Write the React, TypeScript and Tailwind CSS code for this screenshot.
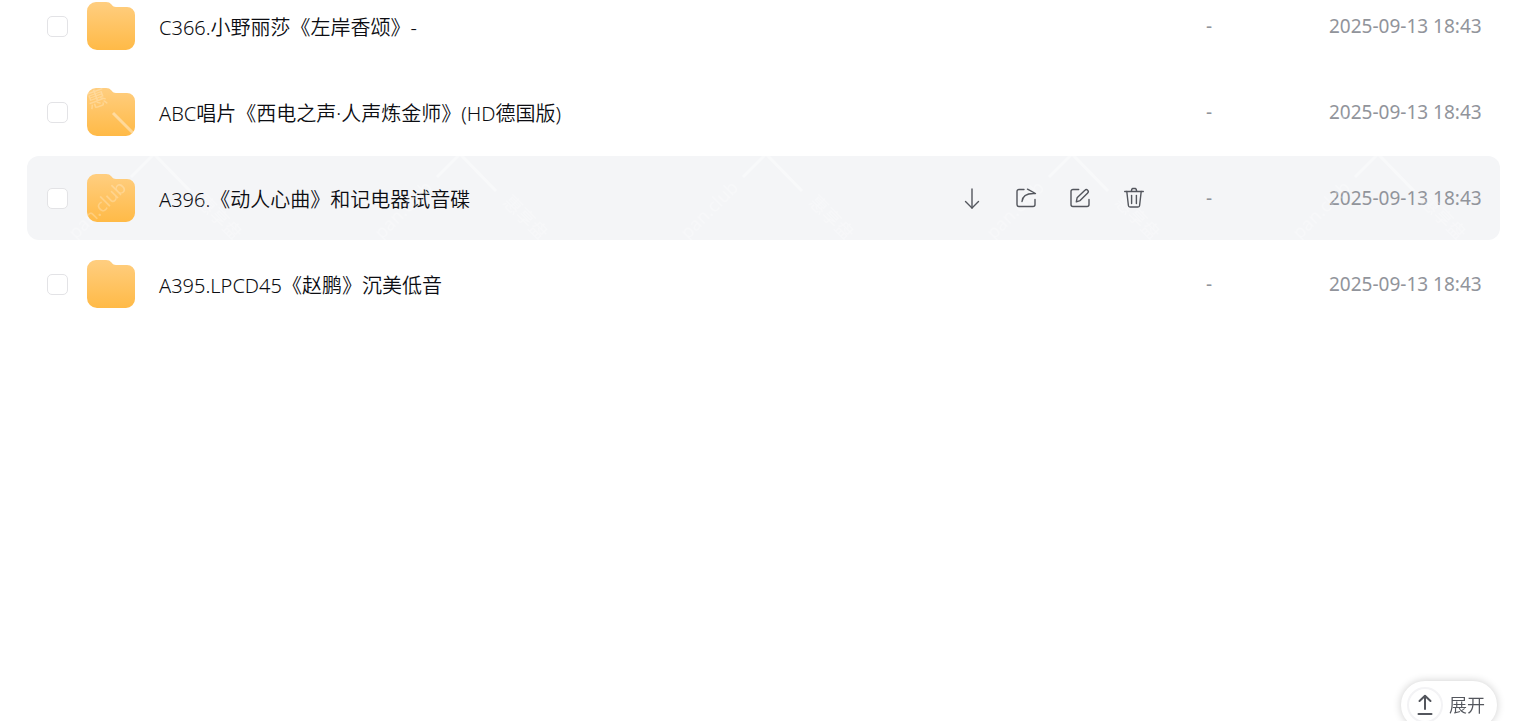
import { useState } from 'react';

const files = [
  { id: 'c366', name: 'C366.小野丽莎《左岸香颂》-', size: '-', date: '2025-09-13 18:43' },
  { id: 'abc', name: 'ABC唱片《西电之声·人声炼金师》(HD德国版)', size: '-', date: '2025-09-13 18:43' },
  { id: 'a396', name: 'A396.《动人心曲》和记电器试音碟', size: '-', date: '2025-09-13 18:43' },
  { id: 'a395', name: 'A395.LPCD45《赵鹏》沉美低音', size: '-', date: '2025-09-13 18:43' },
];

const actions = [
  { label: '下载', paths: ['M12 3v19', 'M5.5 15.5l6.5 6.5 6.5-6.5'] },
  {
    label: '分享',
    paths: [
      'M10 3.5H5a2 2 0 0 0-2 2v13a2 2 0 0 0 2 2h14a2 2 0 0 0 2-2v-5',
      'M13.5 3.2l8 4.3C13.5 7 8.5 9.5 8 15.5',
    ],
  },
  {
    label: '重命名',
    paths: [
      'M10.7 3.5H5a2 2 0 0 0-2 2v13a2 2 0 0 0 2 2h14a2 2 0 0 0 2-2v-5',
      'M8.3 15.8l.8-4 7.8-7.6a1.9 1.9 0 0 1 2.8 2.7l-7.6 7.7z',
    ],
  },
  {
    label: '删除',
    paths: [
      'M2.7 5.5h18.6',
      'M9.3 5.3l.6-2a1 1 0 0 1 1-.8h2.2a1 1 0 0 1 1 .8l.6 2',
      'M4.8 5.5l1.6 14a1.6 1.6 0 0 0 1.6 1.5h8a1.6 1.6 0 0 0 1.6-1.5l1.6-14',
      'M9.6 9.5v8',
      'M14.4 9.5v8',
    ],
  },
];

function FolderIcon() {
  return (
    <svg className="w-12 h-12 shrink-0" viewBox="0 0 48 48" aria-hidden="true">
      <defs>
        <linearGradient id="folder" x1="0" y1="0" x2="0" y2="1">
          <stop offset="0" stopColor="#ffce80" />
          <stop offset="1" stopColor="#ffba47" />
        </linearGradient>
      </defs>
      <path
        fill="url(#folder)"
        d="M9 0h10c2.500 0 4 .8 5.500 2.500C26 4.300 27 5 29 5h11a8 8 0 0 1 8 8v26a9 9 0 0 1-9 9H10A10 10 0 0 1 0 38V9a9 9 0 0 1 9-9z"
      />
    </svg>
  );
}

function Watermark() {
  return (
    <svg className="absolute inset-0 w-full h-80 pointer-events-none" aria-hidden="true">
      <defs>
        <pattern id="mark" width="306" height="320" patternUnits="userSpaceOnUse">
          <g stroke="#fff" strokeOpacity="0.4" strokeWidth="3">
            <path d="M113 113l22 22" />
            <path d="M153 155l-22 22" />
            <path d="M155 155l35 36" />
          </g>
          <g fill="#fff" fillOpacity="0.25" fontSize="18">
            <text transform="translate(76 240) rotate(-45)">pan.club</text>
            <text transform="translate(196 203) rotate(45)">惠享盘</text>
            <text transform="translate(90 109) rotate(-20)" fontSize="20">惠</text>
          </g>
        </pattern>
      </defs>
      <rect width="100%" height="100%" fill="url(#mark)" />
    </svg>
  );
}

export default function App() {
  const [hovered, setHovered] = useState('a396');

  return (
    <div className="relative min-h-screen overflow-hidden bg-white font-['Noto_Sans','Noto_Sans_CJK_SC',sans-serif] text-[#0c0d12]">
      <div className="pl-[27px] pr-[33px]">
        <table className="-mt-[18px] w-full table-fixed border-separate border-spacing-x-0 border-spacing-y-[2px] text-[19px]">
          <colgroup>
            <col className="w-[60px]" />
            <col />
            <col className="w-[246px]" />
            <col className="w-[123px]" />
            <col className="w-[171px]" />
          </colgroup>
          <tbody>
            {files.map((file) => {
              const active = hovered === file.id;
              return (
                <tr
                  key={file.id}
                  onMouseEnter={() => setHovered(file.id)}
                  className={`h-[84px] ${active ? 'bg-[#f4f5f7]' : ''}`}
                >
                  <td className="rounded-l-xl p-0 pl-5">
                    <input
                      type="checkbox"
                      aria-label={file.name}
                      className="block w-[21px] h-[21px] appearance-none rounded-[5px] border border-[#e3e3e6] bg-white checked:bg-blue-500"
                    />
                  </td>
                  <td className="p-0">
                    <a
                      href={`#${file.id}`}
                      className="flex items-center gap-6 whitespace-nowrap text-xl font-[350]"
                    >
                      <FolderIcon />
                      <span className="pt-[3px]">{file.name}</span>
                    </a>
                  </td>
                  <td className="p-0">
                    {active && (
                      <div className="relative z-10 flex gap-[30px] text-[#53565d]">
                        {actions.map((action) => (
                          <button key={action.label} type="button" aria-label={action.label} className="w-6 h-6">
                            <svg
                              className="w-6 h-6"
                              viewBox="0 0 24 24"
                              fill="none"
                              stroke="currentColor"
                              strokeWidth="1.4"
                              strokeLinecap="round"
                              strokeLinejoin="round"
                            >
                              {action.paths.map((d) => (
                                <path key={d} d={d} />
                              ))}
                            </svg>
                          </button>
                        ))}
                      </div>
                    )}
                  </td>
                  <td className="p-0 text-[#91949b]">{file.size}</td>
                  <td className="rounded-r-xl p-0 whitespace-nowrap text-[#91949b]">{file.date}</td>
                </tr>
              );
            })}
          </tbody>
        </table>
      </div>

      <Watermark />

      {/* Upload panel toggle, tucked into the bottom edge */}
      <button
        type="button"
        className="fixed -bottom-2 right-9 flex items-center gap-1.5 h-12 rounded-full bg-white pl-1.5 pr-3 text-lg font-[350] text-[#53565d] shadow-[0_0_8px_rgba(0,0,0,0.2)]"
      >
        <span className="flex items-center justify-center w-9 h-9 rounded-full border-2 border-[#f3f3f5]">
          <svg
            className="w-6 h-6"
            viewBox="0 0 24 24"
            fill="none"
            stroke="currentColor"
            strokeWidth="2"
            strokeLinecap="round"
            strokeLinejoin="round"
          >
            <path d="M12 16V3" />
            <path d="M6.500 8L12 2.800 17.500 8" />
            <path d="M5.500 21h13" />
          </svg>
        </span>
        展开
      </button>
    </div>
  );
}
